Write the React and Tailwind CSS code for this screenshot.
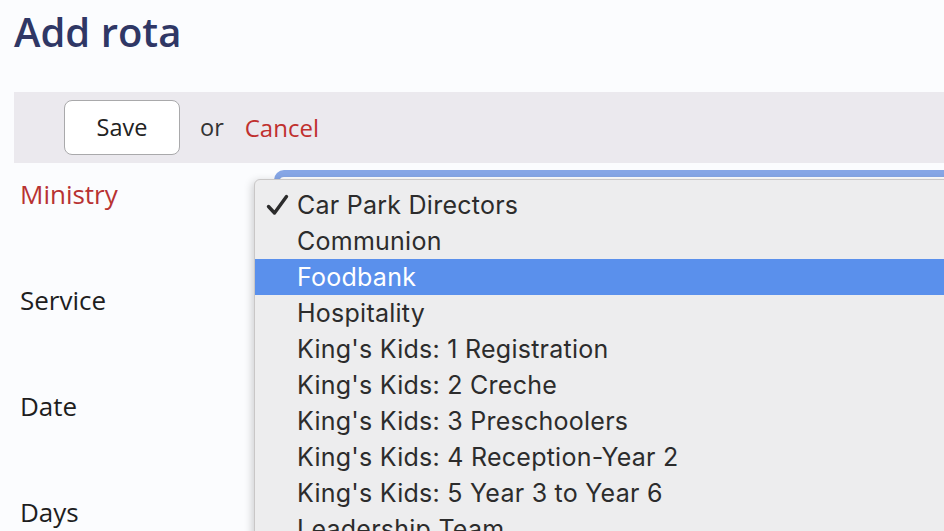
import React from "react";

const ministries = [
  "Car Park Directors",
  "Communion",
  "Foodbank",
  "Hospitality",
  "King's Kids: 1 Registration",
  "King's Kids: 2 Creche",
  "King's Kids: 3 Preschoolers",
  "King's Kids: 4 Reception-Year 2",
  "King's Kids: 5 Year 3 to Year 6",
  "Leadership Team",
];

const fields = ["Service", "Date", "Days"];

export default function App() {
  return (
    <div className="relative h-[531px] w-[944px] overflow-hidden bg-[#fbfcfe] font-['Open_Sans',sans-serif]">
      {/* Title */}
      <div className="h-[92px] px-[14px] pt-[4px]">
        <h1 className="text-[40px] font-semibold leading-[56px] text-[#2f3765]">Add rota</h1>
      </div>

      {/* Action bar */}
      <div className="ml-[14px] flex h-[71px] items-center bg-[#ebe9ee] pl-[50px]">
        <button className="h-[55px] w-[116px] rounded-[8px] border-[1.5px] border-[#a9a9ab] bg-white text-[23.5px] text-[#222]">
          Save
        </button>
        <span className="ml-[20px] text-[23.5px] text-[#333]">or</span>
        <span className="ml-[21px] text-[24px] text-[#c0302e]">Cancel</span>
      </div>

      {/* Form */}
      <div className="pl-[20px] pt-[13px]">
        <div className="flex h-[106px]">
          <div className="w-[234px] text-[26px] leading-[36px] text-[#b83232]">Ministry</div>
          <div className="relative flex-1">
            <div className="ml-[20px] -mt-[6px] h-[60px] rounded-tl-[10px] border-l-[6px] border-t-[7px] border-[#86a6e6] bg-white" />
          </div>
        </div>
        {fields.map((f) => (
          <div key={f} className="flex h-[106px]">
            <div className="w-[234px] text-[26px] leading-[36px] text-[#1e1e1e]">{f}</div>
          </div>
        ))}
      </div>

      {/* Open dropdown menu */}
      <div className="absolute left-[254px] top-[179px] h-[400px] w-[720px] rounded-tl-[6px] border border-[#c9c7c7] bg-[#ededee] pt-[7px] shadow-[-2px_2px_8px_rgba(0,0,0,0.18)] font-['Inter',sans-serif]">
        {ministries.map((m, i) => (
          <div
            key={m}
            className={`flex h-[36px] items-center ${i === 2 ? "bg-[#5a90ec] text-white" : "text-[#2c2c2c]"}`}
          >
            <span className="flex w-[42px] justify-end pr-[8px]">
              {i === 0 && (
                <svg width="23" height="22" viewBox="0 0 23 22">
                  <path d="M2.5 12.5 L8.5 19 L20.5 2.5" fill="none" stroke="#2c2c2c" strokeWidth="3.4" strokeLinecap="round" strokeLinejoin="round" />
                </svg>
              )}
            </span>
            <span className="text-[25px] leading-none tracking-[0.25px]">{m}</span>
          </div>
        ))}
      </div>
    </div>
  );
}
